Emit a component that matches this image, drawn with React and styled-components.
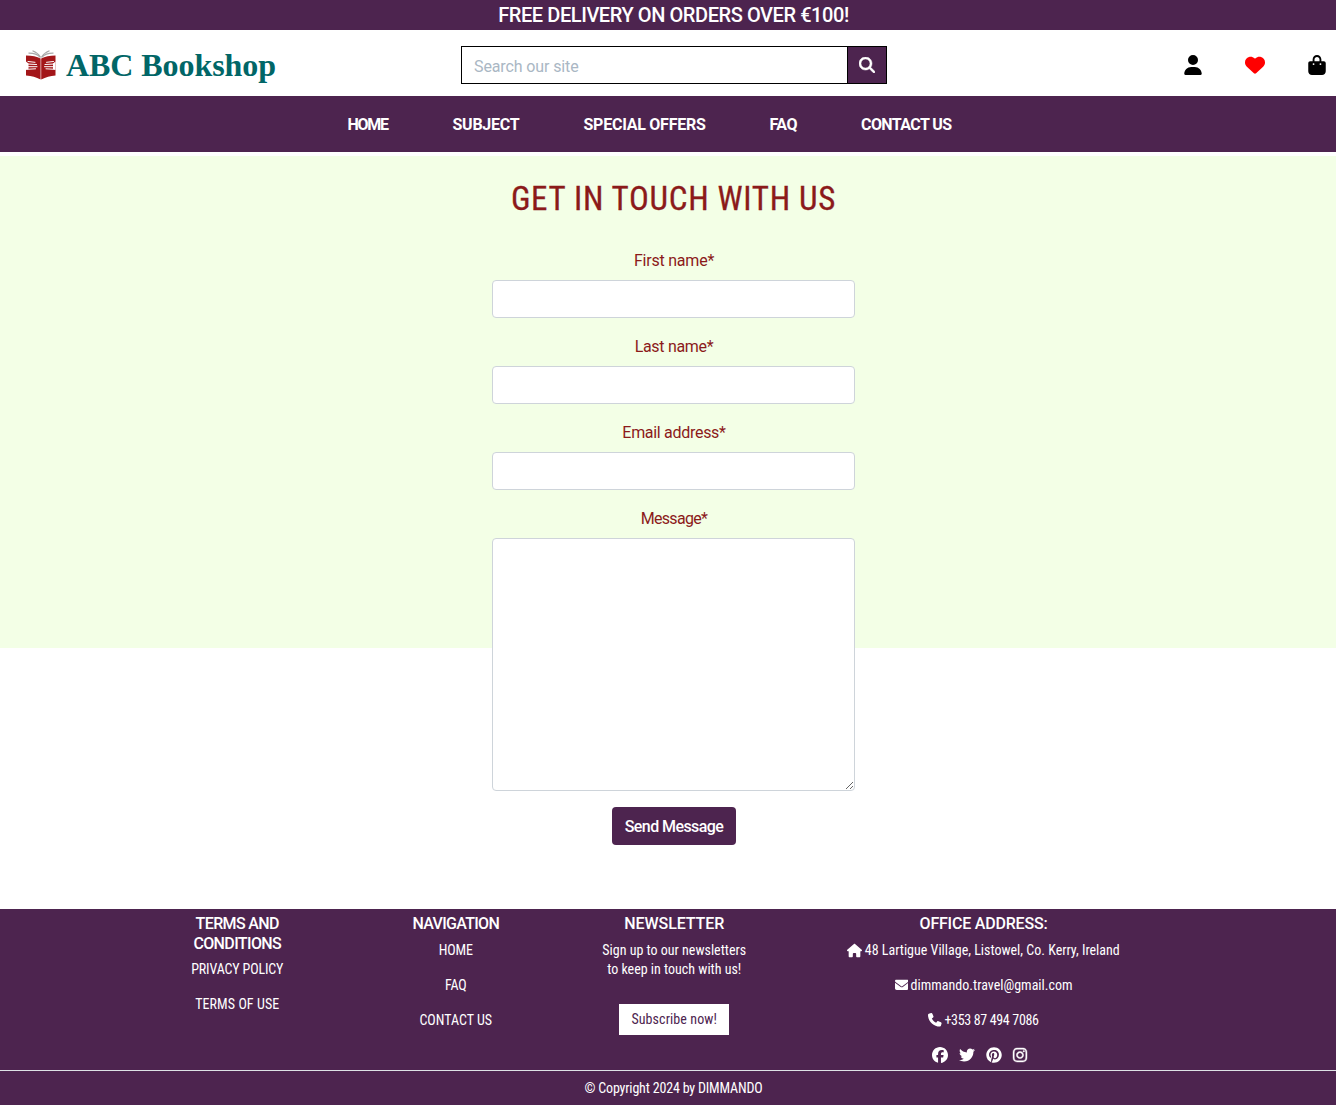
import React from 'react';
import styled, { createGlobalStyle } from 'styled-components';
import {
  FaUser, FaHeart, FaBagShopping, FaMagnifyingGlass, FaHouse, FaEnvelope, FaPhone,
  FaFacebook, FaTwitter, FaPinterest, FaInstagram,
} from 'react-icons/fa6';

const PURPLE = '#4d244f';
const MAROON = '#8b1a1a';

const GlobalStyle = createGlobalStyle`
  *, *::before, *::after { box-sizing: border-box; }
  html { overflow: hidden; }
  body { margin: 0; overflow: hidden; background: #fff; font: 400 16px/24px Roboto, sans-serif; }
  svg { display: block; }
`;

const Page = styled.div`
  width: 1347px;
`;

const Banner = styled.div`
  height: 30px;
  background: ${PURPLE};
  color: #fff;
  text-align: center;
  font-size: 20px;
  font-weight: 500;
  line-height: 30px;
  letter-spacing: -0.42px;
`;

const Header = styled.header`
  display: grid;
  grid-template-columns: 461px 426px 1fr;
  align-items: center;
  height: 66px;
  padding-top: 4px;
`;

const Brand = styled.a`
  display: flex;
  align-items: center;
  gap: 10px;
  padding-left: 26px;
  color: #016667;
  font: 700 32px/36px "Liberation Serif", serif;
  letter-spacing: -0.07px;
`;

const SearchForm = styled.form`
  display: flex;
  height: 38px;
  border: 1px solid #000;
`;

const SearchInput = styled.input`
  flex: 1;
  min-width: 0;
  border: 0;
  outline: 0;
  padding: 3px 12px 0;
  font: 400 16px/24px Roboto, sans-serif;
  letter-spacing: -0.12px;
  &::placeholder { color: #aab7c4; opacity: 1; }
`;

const SearchButton = styled.button`
  display: flex;
  align-items: center;
  justify-content: center;
  width: 39px;
  padding: 0;
  border: 0;
  border-left: 1px solid #000;
  background: ${PURPLE};
  color: #fff;
  svg { stroke: currentColor; stroke-width: 16px; }
`;

const Actions = styled.div`
  display: flex;
  justify-content: flex-end;
  gap: 42px;
  padding: 0 20px 0 0;
`;

const Action = styled.a`
  color: ${(p) => p.$color || '#000'};
`;

const Nav = styled.nav`
  display: flex;
  gap: 64px;
  height: 56px;
  margin-bottom: 4px;
  padding: 1px 0 0 347.5px;
  background: ${PURPLE};
`;

const NavLink = styled.a`
  width: ${(p) => p.$width}px;
  color: #fff;
  font-weight: 700;
  line-height: 56px;
  white-space: nowrap;
  letter-spacing: ${(p) => p.$spacing}px;
`;

const Contact = styled.main`
  height: 492px;
  margin-bottom: 261px;
  padding-top: 23px;
  background: #f3ffe6;
`;

const Title = styled.h1`
  margin: 0 0 29px;
  color: ${MAROON};
  text-align: center;
  font-size: 33px;
  font-weight: 400;
  font-stretch: 75%;
  line-height: 40px;
  letter-spacing: 0.68px;
  -webkit-text-stroke: 0.3px ${MAROON};
`;

const ContactForm = styled.form`
  display: flex;
  flex-direction: column;
  align-items: center;
  width: 363px;
  margin: 0 auto;
`;

const Label = styled.label`
  margin-bottom: 7px;
  padding: 1px 0 0 1px;
  color: ${MAROON};
  line-height: 24px;
  letter-spacing: ${(p) => p.$spacing}px;
`;

const Field = styled.input`
  display: block;
  width: 100%;
  height: 38px;
  margin: 0 0 16px;
  padding: 6px 12px;
  border: 1px solid #ced4da;
  border-radius: 4px;
  background: #fff;
  font: 400 16px/24px Roboto, sans-serif;
`;

const MessageField = styled(Field)`
  height: 253px;
  resize: vertical;
`;

const SendButton = styled.button`
  width: 124px;
  height: 38px;
  padding: 2px 0 0 1px;
  border: 0;
  border-radius: 4px;
  background: ${PURPLE};
  color: #fff;
  font: 500 16px/36px Roboto, sans-serif;
  letter-spacing: -0.57px;
`;

const Footer = styled.footer`
  height: 196px;
  background: ${PURPLE};
  color: #fff;
  font-size: 14px;
  font-stretch: 75%;
  line-height: 19px;
`;

const Columns = styled.div`
  display: grid;
  grid-template-columns: 218.5px 218.5px 218.5px 400px;
  height: 161px;
  padding: 5px 0 0 128px;
`;

const Column = styled.div`
  display: flex;
  flex-direction: column;
  align-items: center;
  text-align: center;
`;

const Heading = styled.h2`
  margin: 0 0 7px;
  font-size: 16px;
  font-weight: 500;
  font-stretch: 100%;
  line-height: 19.5px;
  letter-spacing: ${(p) => p.$spacing}px;
`;

const Line = styled.p`
  display: flex;
  align-items: center;
  gap: 2.5px;
  margin: 0 0 16px;
  white-space: nowrap;
  letter-spacing: ${(p) => p.$spacing || 0}px;
`;

const Invite = styled.p`
  margin: 0 0 25px;
`;

const Subscribe = styled.button`
  width: 110px;
  height: 31px;
  padding: 0;
  border: 0;
  background: #fff;
  color: ${PURPLE};
  font: 400 14px/31px Roboto, sans-serif;
  font-stretch: 75%;
  letter-spacing: 0.1px;
`;

const Social = styled.div`
  display: flex;
  gap: 11px;
  margin-top: 1px;
  padding-right: 7px;
  svg:last-child { margin-left: -1px; stroke: currentColor; stroke-width: 14px; }
`;

const Copyright = styled.div`
  height: 35px;
  border-top: 1px solid #dee2e6;
  text-align: center;
  line-height: 34px;
  letter-spacing: -0.18px;
`;

const BookLogo = () => (
  <svg width="30" height="30" viewBox="0 0 30 30">
    <g fill="none" stroke="#a8a8a8" strokeWidth="1.2">
      <path d="M14.5 7.500C11 4 8 3 2.500 3.200M14.500 7C12 3.500 10 2 6.500.8" />
      <path d="M15.500 7.500C19 4 22 3 27.500 3.200M15.500 7C18 3.500 20 2 23.500.8" />
    </g>
    <path fill="#a31619" d="M0 5.500C6 5.500 11 6.500 14.600 8.500v21C10 27 6 26 0 25.500zM29.500 5.500C23.500 5.500 19 6.500 15.200 8.500v21C20 27 24 26 29.500 25.500z" />
    <g stroke="#fff" strokeWidth="1" strokeLinecap="round" fill="none">
      <path d="M2 11.500 9 12.300M1 14 10.500 14.500M1 16.700H11M1 19.300 9.500 18.800" />
      <path d="M27.500 11.500 20.500 12.300M28.500 14 19 14.500M28.500 16.700H18.500M28.500 19.300 20 18.800" />
    </g>
    <path fill="#fff" d="M0 11.500 2.500 13.500v5.500L0 20zM29.500 11.500 27 13.500v5.500l2.500 1z" />
  </svg>
);

const NAV = [
  ['HOME', 41, -1.3], ['SUBJECT', 67, -0.25], ['SPECIAL OFFERS', 122, -0.25],
  ['FAQ', 27.5, -0.5], ['CONTACT US', 91, -0.58],
];

const FIELDS = [['First name*', -0.22], ['Last name*', -0.3], ['Email address*', -0.3]];

export default function App() {
  return (
    <Page>
      <GlobalStyle />
      <Banner>FREE DELIVERY ON ORDERS OVER €100!</Banner>
      <Header>
        <Brand><BookLogo />ABC Bookshop</Brand>
        <SearchForm>
          <SearchInput placeholder="Search our site" />
          <SearchButton type="button" aria-label="Search"><FaMagnifyingGlass size={16} /></SearchButton>
        </SearchForm>
        <Actions>
          <Action><FaUser size={20} /></Action>
          <Action $color="#f00"><FaHeart size={20} /></Action>
          <Action><FaBagShopping size={20} /></Action>
        </Actions>
      </Header>
      <Nav>
        {NAV.map(([text, width, spacing]) => (
          <NavLink key={text} $width={width} $spacing={spacing}>{text}</NavLink>
        ))}
      </Nav>
      <Contact>
        <Title>GET IN TOUCH WITH US</Title>
        <ContactForm>
          {FIELDS.map(([text, spacing]) => (
            <React.Fragment key={text}>
              <Label $spacing={spacing}>{text}</Label>
              <Field />
            </React.Fragment>
          ))}
          <Label $spacing={-0.68}>Message*</Label>
          <MessageField as="textarea" />
          <SendButton type="button">Send Message</SendButton>
        </ContactForm>
      </Contact>
      <Footer>
        <Columns>
          <Column>
            <Heading $spacing={-0.62}>TERMS AND<br />CONDITIONS</Heading>
            <Line $spacing={-0.15}>PRIVACY POLICY</Line>
            <Line $spacing={0.08}>TERMS OF USE</Line>
          </Column>
          <Column>
            <Heading $spacing={-0.68}>NAVIGATION</Heading>
            <Line $spacing={-0.2}>HOME</Line>
            <Line $spacing={-0.1}>FAQ</Line>
            <Line>CONTACT US</Line>
          </Column>
          <Column>
            <Heading $spacing={-0.08}>NEWSLETTER</Heading>
            <Invite>Sign up to our newsletters<br />to keep in touch with us!</Invite>
            <Subscribe type="button">Subscribe now!</Subscribe>
          </Column>
          <Column>
            <Heading $spacing={-0.2}>OFFICE ADDRESS:</Heading>
            <Line><FaHouse size={15} />48 Lartigue Village, Listowel, Co. Kerry, Ireland</Line>
            <Line><FaEnvelope size={13.6} />dimmando.travel@gmail.com</Line>
            <Line $spacing={-0.34}><FaPhone size={13.6} />+353 87 494 7086</Line>
            <Social>
              <FaFacebook size={16} />
              <FaTwitter size={16} />
              <FaPinterest size={16} />
              <FaInstagram size={16} />
            </Social>
          </Column>
        </Columns>
        <Copyright>© Copyright 2024 by DIMMANDO</Copyright>
      </Footer>
    </Page>
  );
}
